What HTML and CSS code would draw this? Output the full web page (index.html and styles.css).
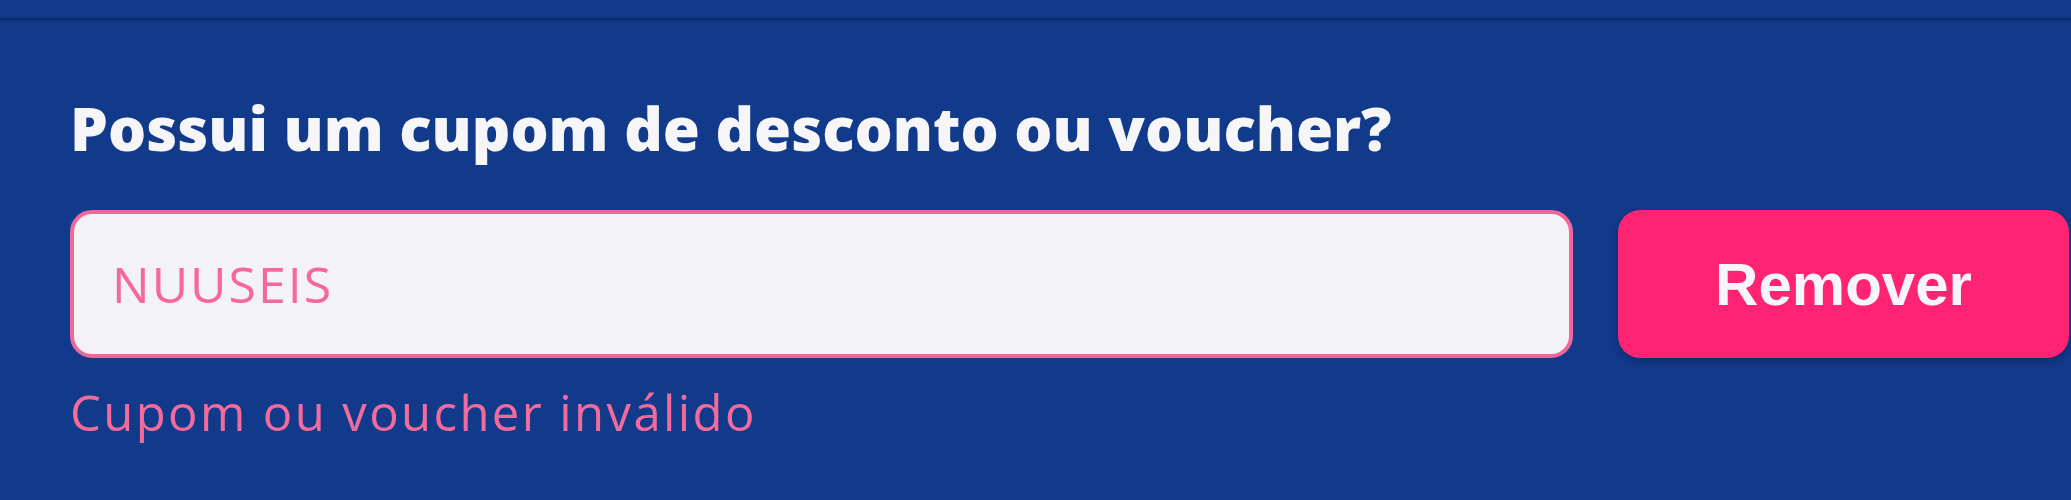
FILE: index.html
```html
<!DOCTYPE html>
<html lang="pt-BR">
<head>
  <meta charset="UTF-8">
  <title>Cupom de desconto</title>
  <link rel="stylesheet" href="styles.css">
</head>
<body>
  <div class="top-bar"></div>

  <section class="coupon">
    <h2 class="coupon-title">Possui um cupom de desconto ou voucher?</h2>

    <div class="coupon-row">
      <input type="text" class="coupon-input" value="NUUSEIS">
      <button class="coupon-button">Remover</button>
    </div>

    <p class="coupon-error">Cupom ou voucher inválido</p>
  </section>
</body>
</html>
```

FILE: styles.css
```css
* {
  margin: 0;
  padding: 0;
  box-sizing: border-box;
}

body {
  background: #123a8b;
  font-family: 'Open Sans', Roboto, sans-serif;
  width: 2071px;
  height: 500px;
  overflow: hidden;
}

.top-bar {
  height: 20px;
  border-bottom: 2px solid #0d2c6c;
  box-shadow: 0 1px 2px rgba(8, 24, 60, 0.35);
}

.coupon {
  padding: 78px 2px 0 70px;
}

.coupon-title {
  color: #f6f5f8;
  font-family: 'Open Sans', sans-serif;
  font-weight: 800;
  font-size: 60px;
  line-height: 60px;
  letter-spacing: 0;
}

.coupon-row {
  display: flex;
  gap: 45px;
  margin-top: 52px;
}

.coupon-input {
  flex: 1;
  height: 148px;
  padding: 0 38px;
  font-family: 'Open Sans', sans-serif;
  font-weight: 500;
  font-size: 50px;
  letter-spacing: 2px;
  color: #f5689b;
  background: #f3f2f5;
  border: 4px solid #f0689b;
  border-radius: 22px;
  outline: none;
}

.coupon-button {
  width: 451px;
  height: 148px;
  font-family: 'Liberation Sans', Arial, sans-serif;
  font-weight: 700;
  font-size: 60px;
  color: #f6f5f8;
  background: #ff2374;
  border: none;
  border-radius: 22px;
  box-shadow: 0 4px 10px rgba(6, 20, 55, 0.35);
  cursor: pointer;
}

.coupon-error {
  margin-top: 26px;
  color: #f36b9d;
  font-family: 'Open Sans', sans-serif;
  font-weight: 500;
  font-size: 49px;
  line-height: 56px;
  letter-spacing: 2.4px;
}
```
